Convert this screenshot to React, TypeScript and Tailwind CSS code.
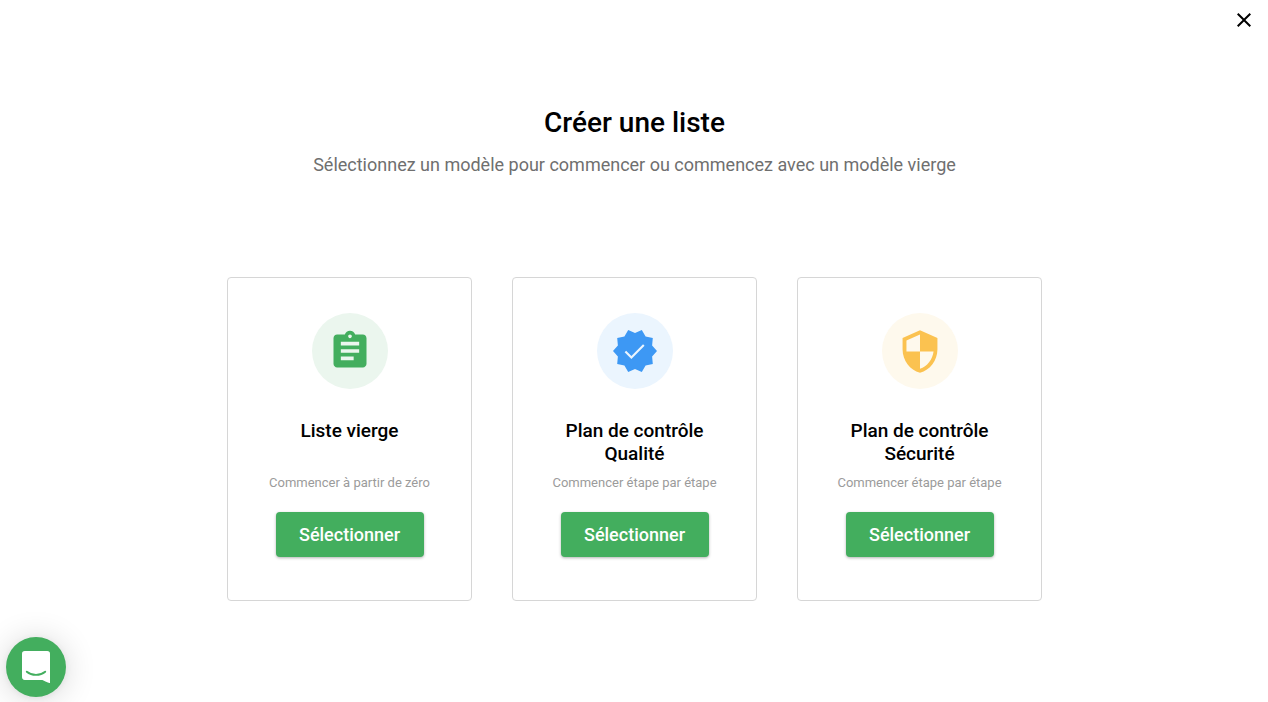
import type { ReactNode } from "react";
import { MdClose } from "react-icons/md";

/* ================= ICONS ================= */

const ClipboardIcon = () => (
  <svg viewBox="0 0 24 24" className="size-11">
    <path
      fill="#43ae5e"
      d="M19 3h-4.18C14.4 1.84 13.3 1 12 1c-1.3 0-2.4.84-2.82 2H5c-1.1 0-2 .9-2 2v14c0 1.1.9 2 2 2h14c1.1 0 2-.9 2-2V5c0-1.1-.9-2-2-2zm-7 0c.55 0 1 .45 1 1s-.45 1-1 1-1-.45-1-1 .45-1 1-1zm2 14H7v-2h7v2zm3-4H7v-2h10v2zm0-4H7V7h10v2z"
    />
  </svg>
);

const VerifiedIcon = () => (
  <svg viewBox="0 0 24 24" className="size-12">
    <path
      fill="#3d98f4"
      d="M23 12l-2.44-2.79.34-3.69-3.61-.82-1.89-3.2L12 2.96 8.6 1.5 6.71 4.69 3.1 5.5l.34 3.7L1 12l2.44 2.79-.34 3.7 3.61.82L8.6 22.5l3.4-1.47 3.4 1.46 1.89-3.19 3.61-.82-.34-3.69L23 12z"
    />
    <path d="M7.2 12.3l3 3 6.2-6.3" fill="none" stroke="#ebf5fe" strokeWidth="1.05" />
  </svg>
);

const ShieldIcon = () => (
  <svg viewBox="-0.4 -0.66 24.8 24.8" className="size-12">
    <path
      fill="#fbc250"
      d="M12 1L3 5v6c0 5.55 3.84 10.74 9 12 5.16-1.26 9-6.45 9-12V5l-9-4zm0 10.99h7c-.53 4.12-3.28 7.79-7 8.94V12H5V6.3l7-3.11v8.8z"
    />
  </svg>
);

const MessengerIcon = () => (
  <svg viewBox="0 0 28 32" className="h-8 w-7">
    <path fill="#fff" d="M2.8 0h22.4a2.8 2.8 0 0 1 2.8 2.8V32s-3.2-.8-7.6-3.1H2.8A2.8 2.8 0 0 1 0 26.1V2.8A2.8 2.8 0 0 1 2.8 0z" />
    <path
      d="M4.8 20.7c5 4.2 13.4 4.2 18.4 0"
      fill="none"
      stroke="#43ae5e"
      strokeWidth="1.9"
      strokeLinecap="round"
    />
  </svg>
);

/* ================= DATA ================= */

type Template = {
  id: string;
  title: string;
  subtitle: string;
  circle: string;
  icon: ReactNode;
};

const templates: Template[] = [
  {
    id: "blank",
    title: "Liste vierge",
    subtitle: "Commencer à partir de zéro",
    circle: "bg-[#ebf6ee]",
    icon: <ClipboardIcon />
  },
  {
    id: "quality",
    title: "Plan de contrôle Qualité",
    subtitle: "Commencer étape par étape",
    circle: "bg-[#ebf5fe]",
    icon: <VerifiedIcon />
  },
  {
    id: "security",
    title: "Plan de contrôle Sécurité",
    subtitle: "Commencer étape par étape",
    circle: "bg-[#fef9ed]",
    icon: <ShieldIcon />
  }
];

/* ================= CARD ================= */

const TemplateCard = ({ item }: { item: Template }) => (
  <div className="flex h-[324px] w-[245px] flex-col items-center rounded border border-[#d6d6d6] px-10 pt-[35px]">
    <div className={`flex size-[76px] shrink-0 items-center justify-center rounded-full ${item.circle}`}>
      {item.icon}
    </div>
    <h2 className="mt-[30px] h-[46px] text-center text-[19px] leading-[23px] font-medium">
      {item.title}
    </h2>
    <p className="mt-2.5 text-[13px] leading-4 whitespace-nowrap text-[#9b9b9b]">{item.subtitle}</p>
    <button className="mt-[21px] h-[45px] w-[148px] shrink-0 rounded bg-[#43ae5e] text-lg font-medium text-white shadow-[0_1px_3px_rgba(0,0,0,0.3)]">
      Sélectionner
    </button>
  </div>
);

/* ================= PAGE ================= */

export default function App() {
  return (
    <main className="relative flex h-[702px] w-full flex-col overflow-hidden bg-white font-[Roboto,sans-serif] text-black">
      <header className="flex h-10 justify-end pt-2 pr-3">
        <button aria-label="Fermer" className="size-6">
          <MdClose className="size-6" />
        </button>
      </header>

      <div className="mt-[67px] pl-px text-center">
        <h1 className="text-[28px] leading-8 font-medium">Créer une liste</h1>
        <p className="mt-[15px] text-lg leading-[22px] text-[#6f6f6f]">
          Sélectionnez un modèle pour commencer ou commencez avec un modèle vierge
        </p>
      </div>

      <div className="mt-[101px] flex justify-center gap-10 pl-px">
        {templates.map((item) => (
          <TemplateCard key={item.id} item={item} />
        ))}
      </div>

      {/* chat launcher */}
      <button
        aria-label="Messagerie"
        className="absolute bottom-[5px] left-1.5 flex size-[60px] items-center justify-center rounded-full bg-[#43ae5e] shadow-[0_1px_6px_rgba(0,0,0,0.06),0_2px_32px_rgba(0,0,0,0.16)]"
      >
        <MessengerIcon />
      </button>
    </main>
  );
}
